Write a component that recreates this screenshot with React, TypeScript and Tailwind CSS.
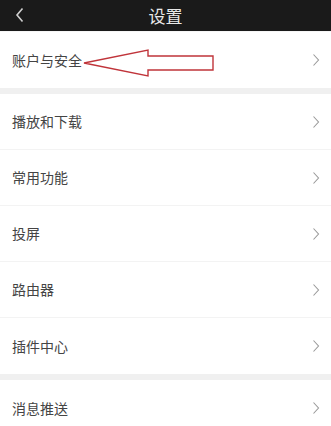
import React from "react";

const Chevron = () => (
  <svg width="8" height="14" viewBox="0 0 8 14" className="shrink-0">
    <polyline points="1.5,1.5 6.5,7 1.5,12.5" fill="none" stroke="#9a9a9a" strokeWidth="1.1" />
  </svg>
);

const Row = ({ label, last, children }: { label: string; last?: boolean; children?: React.ReactNode }) => (
  <div className={`relative flex h-[56px] items-center justify-between bg-white pl-[12px] pr-[11px] ${last ? "" : "border-b border-[#f3f3f3]"}`}>
    <span className="text-[14px] text-[#444444]">{label}</span>
    {children}
    <Chevron />
  </div>
);

export default function App() {
  return (
    <div
      className="h-[426px] w-[331px] overflow-hidden bg-[#f0f0f0]"
      style={{ fontFamily: '"Noto Sans CJK SC", "Noto Sans", sans-serif' }}
    >
      <div className="relative flex h-[31px] items-center justify-center bg-[#1a1a1a]">
        <svg width="10" height="16" viewBox="0 0 10 16" className="absolute left-[15px] top-[7px]">
          <polyline points="7.5,1.5 2,8 7.5,14.5" fill="none" stroke="#cfcfcf" strokeWidth="1.6" />
        </svg>
        <span className="text-[17px] leading-none text-[#e8e8e8]">设置</span>
      </div>
      <div className="h-[1px] bg-[#f6f6f6]" />
      <Row label="账户与安全" last>
        <svg width="140" height="30" viewBox="0 0 140 30" className="absolute left-[82px] top-[16px]">
          <polygon
            points="2,15 66,2 66,8 131,8 131,22 66,22 66,28"
            fill="white"
            stroke="#c0343a"
            strokeWidth="1.4"
            strokeLinejoin="miter"
          />
        </svg>
      </Row>
      <div className="h-[6px] bg-[#f0f0f0]" />
      <Row label="播放和下载" />
      <Row label="常用功能" />
      <Row label="投屏" />
      <Row label="路由器" />
      <Row label="插件中心" last />
      <div className="h-[6px] bg-[#f0f0f0]" />
      <Row label="消息推送" last />
    </div>
  );
}
